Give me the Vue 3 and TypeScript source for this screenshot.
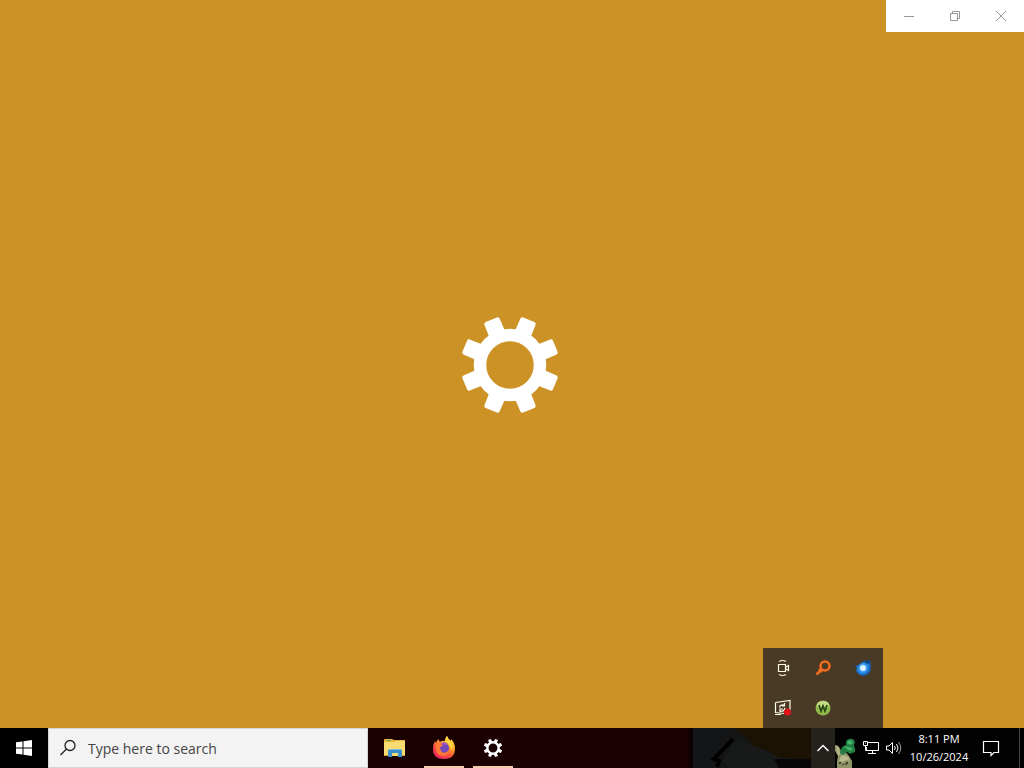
<script setup lang="ts">
import { ref } from 'vue'

const query = ref('')
const teeth: number[] = [22.5, 67.5, 112.5, 157.5, 202.5, 247.5, 292.5, 337.5]
</script>

<template>
  <div class="desktop">
    <main class="window">
      <div class="captions">
        <button type="button" aria-label="Minimize">
          <svg width="12" height="12" viewBox="0 0 12 12"><path d="M1 6.500h10" /></svg>
        </button>
        <button type="button" aria-label="Restore">
          <svg width="12" height="12" viewBox="0 0 12 12"><path d="M1.500 3.500h7v7h-7zM3.500 3.500v-2h7v7h-2" /></svg>
        </button>
        <button type="button" aria-label="Close">
          <svg width="12" height="12" viewBox="0 0 12 12"><path d="M1 1l10 10M11 1L1 11" /></svg>
        </button>
      </div>
      <svg class="splash" width="100" height="100" viewBox="-50 -50 100 100" aria-hidden="true">
        <circle r="30" fill="none" stroke="#fff" stroke-width="12.500" />
        <path
          v-for="angle in teeth"
          :key="angle"
          :transform="`rotate(${angle})`"
          d="M-8.500-32L-8.200-47Q-8-49-6-49H6Q8-49 8.200-47L8.500-32Z"
          fill="#fff"
        />
      </svg>
    </main>

    <footer class="taskbar">
      <svg class="wallpaper" width="656" height="40" viewBox="0 0 656 40" aria-hidden="true">
        <rect width="656" height="40" fill="#020202" />
        <rect width="325" height="40" fill="#1c0103" />
        <rect x="321" width="4" height="40" fill="#0b0102" />
        <path d="M325 0h60l20 22 40 9v9H325z" fill="#141516" />
        <path d="M366 0h77v31q-32 0-51-10z" fill="#1b1204" />
        <path d="M368 11l24 9q20 6 31 20h-62l-6-8z" fill="#171a18" />
        <path d="M378 15l14 5q12 4 20 10h31V20z" fill="#1b1204" />
        <path d="M406 31h40v9h-35z" fill="#080708" />
        <path d="M365 11l-19 20 5 2-2 6" fill="none" stroke="#000" stroke-width="4" />
      </svg>

      <button class="start" type="button" aria-label="Start">
        <svg width="16" height="16" viewBox="0 0 16 16">
          <path d="M0 2.300L6.500 1.400V7.500H0zM7.500 1.200L16 0v7.500H7.500zM0 8.500h6.500v6.100L0 13.700zM7.500 8.500H16V16l-8.500-1.200z" fill="#fff" />
        </svg>
      </button>
      <label class="search">
        <svg width="18" height="18" viewBox="0 0 18 18" fill="none" stroke="#222" stroke-width="1.300">
          <circle cx="11" cy="6.500" r="5" /><path d="M7.500 10L1.500 16" />
        </svg>
        <input v-model="query" type="text" placeholder="Type here to search" aria-label="Search" />
      </label>

      <nav class="apps" aria-label="Applications">
        <button class="app" type="button" aria-label="File Explorer">
          <svg width="24" height="24" viewBox="0 0 24 24">
            <path d="M1 4q0-1 1-1h7l2 1h11v5H1z" fill="#e9b53c" />
            <path d="M4 4h4v1H4z" fill="#55a867" />
            <path d="M1 6h10l2-1h9v15H1z" fill="#f8db71" />
            <path d="M5 21v-6q0-2 2-2h10q2 0 2 2v6h-4v-4H9v4z" fill="#3a91cc" />
            <path d="M6 13h12v1H6z" fill="#76bde4" />
            <path d="M1 19h4v1H1zM19 19h3v1h-3z" fill="#d79d2b" />
          </svg>
        </button>
        <button class="app running" type="button" aria-label="Firefox">
          <svg width="24" height="24" viewBox="0 0 24 24">
            <defs>
              <linearGradient id="flame" x1="0.850" y1="0" x2="0.250" y2="1">
                <stop offset="0" stop-color="#fff04a" /><stop offset="0.350" stop-color="#ffac26" />
                <stop offset="0.650" stop-color="#ff5638" /><stop offset="1" stop-color="#ed2069" />
              </linearGradient>
            </defs>
            <path d="M3 5l1 2 2-4 2 3q2-2 5-1 0-3 2-5 1 3 3 4l1 2q0-2 0-3 4 4 4 9 0 11-11 11T1 13q0-5 2-8z" fill="url(#flame)" />
            <circle cx="12" cy="12" r="5" fill="#7549bd" />
            <path d="M4 7q4-2 5 1l2 1q-1 2-3 2 0 5 4 6 3 0 5-3-1 6-6 6-7 0-7-8z" fill="#ff7835" />
            <path d="M9 7q3-2 7 1l-3 1z" fill="#9c58d2" />
            <path d="M15 0q1 3 4 5 3 5 0 10 0-6-6-10 0-3 2-5z" fill="#ffd440" />
          </svg>
        </button>
        <button class="app running" type="button" aria-label="Settings">
          <svg width="20" height="20" viewBox="-53 -53 106 106">
            <circle r="30" fill="none" stroke="#fff" stroke-width="13" />
            <path
              v-for="angle in teeth"
              :key="angle"
              :transform="`rotate(${angle})`"
              d="M-9-32L-8-49H8L9-32Z"
              fill="#fff"
            />
          </svg>
        </button>
      </nav>

      <div class="tray">
        <button class="chevron" type="button" aria-label="Hide hidden icons">
          <svg width="14" height="10" viewBox="0 0 14 10"><path d="M1.500 8L7 2.500 12.500 8" fill="none" stroke="#fff" stroke-width="1.500" /></svg>
        </button>
        <button class="pet" type="button" aria-label="Desktop companion">
          <svg width="24" height="32" viewBox="0 0 24 32">
            <path d="M0 9q4 0 5 4l2 3 3-1 4 5 3 5v7H2v-7l1-5-3-5z" fill="#8c9468" />
            <path d="M1 10l3 2 1 6-2 2zM6 20q4-2 7 1l2 4-4-1-3 2-4-1z" fill="#b8b98c" />
            <path d="M4 26h2v2H4zM11 26h2v2h-2z" fill="#3c3b24" />
            <path d="M7 29q3-2 5 0" stroke="#514b2d" fill="none" />
            <path d="M6 13q2-4 5-4-1-5 3-6 5-1 6 3-1 2-1 4 2 3 1 6l-5 2-3-2-4 3-3-2z" fill="#237c42" />
            <path d="M13 5q4-2 5 2-3 3-6 0zM9 11q5-1 9 2l-3 2z" fill="#43b568" />
          </svg>
        </button>
        <button class="network" type="button" aria-label="Network">
          <svg width="18" height="16" viewBox="0 0 18 16" fill="none" stroke="#fff">
            <path d="M6 2.500h10.500v8H4.500V7M10.500 10.500v3M6 13.500h8M1.500 1.500h4v4h-4zM3.500 5.500v5h1" />
            <path d="M3 3h1" />
          </svg>
        </button>
        <button class="volume" type="button" aria-label="Volume">
          <svg width="18" height="16" viewBox="0 0 18 16" fill="none" stroke="#fff">
            <path d="M1.500 6v4h2.500l3.500 3.500v-11L4 6z" /><path d="M9.500 6q1.500 2 0 4M11.500 4q3 4 0 8" />
            <path d="M13.500 2q4.500 6 0 12" stroke="#999" />
          </svg>
        </button>
        <button class="clock" type="button">
          <span>8:11 PM</span>
          <span>10/26/2024</span>
        </button>
        <button class="notices" type="button" aria-label="Notifications">
          <svg width="18" height="18" viewBox="0 0 18 18"><path d="M1.500 2.500h15v11H12L9 16.500v-3H1.500z" fill="none" stroke="#fff" stroke-width="1.200" /></svg>
        </button>
        <button class="peek" type="button" aria-label="Show desktop"></button>
      </div>
    </footer>

    <section class="flyout" aria-label="Hidden icons">
      <button type="button" aria-label="Meet Now">
        <svg width="16" height="18" viewBox="0 0 16 18" fill="none" stroke="#fff8dc">
          <path d="M3.500 5.500h7v7h-7zM11 8l2.500-1.500v5L11 10M4 2.500Q7.500 .5 11 2.500M4 15.500q3.500 2 7 0" stroke-width="1.200" />
        </svg>
      </button>
      <button type="button" aria-label="Search tool">
        <svg width="16" height="16" viewBox="0 0 16 16" fill="none" stroke="#f36b1c">
          <circle cx="10" cy="6" r="4.500" stroke-width="2.500" /><path d="M6.500 9.500L1.500 14.500M4 9l3 3" stroke-width="2.500" />
        </svg>
      </button>
      <button type="button" aria-label="Thunderbird">
        <svg width="18" height="18" viewBox="0 0 18 18">
          <path d="M1 6l4 1q2-4 6-5l5-1 1 7q0 8-8 9-6-1-7-6l1-1z" fill="#1764b5" />
          <path d="M3 10q1-6 8-7 3 0 4 4 0 7-6 8-5 0-6-5z" fill="#298be3" />
          <circle cx="9" cy="9" r="3.500" fill="#8dd1ff" /><circle cx="9" cy="9" r="2.500" fill="#e4f4ff" />
          <path d="M11 2l5-1-1 4-4-1z" fill="#0c4486" />
        </svg>
      </button>
      <button type="button" aria-label="Sync, stopped">
        <svg width="18" height="18" viewBox="0 0 18 18" fill="none" stroke="#fffbe9">
          <path d="M1.500 3.500L16 1.500V11M10 14.500l-8.500-1V3.500M1 15.500h6" stroke-width="1.200" />
          <path d="M5.500 8.500q.5-3 4.500-2.500M10.500 4v3H8M6 13v-3h3M6 12q4 1 5-3" stroke-width="1.200" />
          <circle cx="13.500" cy="13" r="3.500" fill="#e3131c" stroke="none" />
        </svg>
      </button>
      <button type="button" aria-label="Webroot">
        <svg width="16" height="16" viewBox="0 0 16 16">
          <circle cx="8" cy="8" r="7.500" fill="#92b94b" /><ellipse cx="8" cy="5" rx="6" ry="4" fill="#c6dc87" />
          <path d="M4 5l2 6 2-5 2 5 2-6" fill="none" stroke="#284812" stroke-width="1.800" />
        </svg>
      </button>
    </section>
  </div>
</template>

<style>
body {
  margin: 0;
}
</style>

<style scoped>
.desktop {
  position: relative;
  display: flex;
  flex-direction: column;
  min-height: 100vh;
  font-family: "Open Sans", "Noto Sans", sans-serif;
}
button {
  display: flex;
  align-items: center;
  justify-content: center;
  margin: 0;
  padding: 0;
  border: 0;
  background: transparent;
  font-family: inherit;
  color: inherit;
}
svg {
  display: block;
  flex: none;
}
.window {
  flex: 1;
  display: grid;
  grid-template-rows: 32px 1fr 30px;
  background: #cd9226;
}
.captions {
  display: flex;
  justify-self: end;
  background: #fff;
}
.captions button {
  width: 46px;
}
.captions path {
  fill: none;
  stroke: #9a959a;
}
.splash {
  place-self: center;
  margin-right: 4px;
}
.taskbar {
  position: relative;
  display: flex;
  height: 40px;
  overflow: hidden;
  background: #000;
  color: #fff;
}
.wallpaper {
  position: absolute;
  top: 0;
  right: 0;
}
.start {
  width: 48px;
}
.search {
  position: relative;
  display: flex;
  align-items: center;
  box-sizing: border-box;
  width: 320px;
  padding: 0 10px;
  gap: 11px;
  border: 1px solid #d4d4d4;
  background: #f3f3f3;
}
.search input {
  flex: 1;
  min-width: 0;
  padding: 0;
  border: 0;
  outline: 0;
  background: transparent;
  font-family: inherit;
  font-size: 14px;
  color: #444;
}
.search input::placeholder {
  color: #444;
  opacity: 1;
}
.apps {
  position: relative;
  display: flex;
  gap: 9px;
  padding-left: 7px;
}
.app {
  box-sizing: border-box;
  width: 40px;
  border-bottom: 2px solid transparent;
  padding-top: 2px;
}
.running {
  border-bottom-color: #f3cda9;
}
.tray {
  position: relative;
  display: flex;
  margin-left: auto;
}
.chevron {
  width: 24px;
  background: #25211d;
}
.pet {
  width: 24px;
  align-items: flex-end;
}
.network {
  width: 24px;
}
.volume {
  width: 22px;
}
.clock {
  flex-direction: column;
  width: 68px;
  padding-bottom: 1px;
  font-size: 11px;
  line-height: 18px;
}
.notices {
  width: 36px;
}
.peek {
  width: 5px;
  margin-left: 10px;
  border-left: 1px solid #444;
}
.flyout {
  position: absolute;
  right: 141px;
  bottom: 40px;
  display: grid;
  grid-template-columns: repeat(3, 40px);
  grid-auto-rows: 40px;
  background: #483a25;
}
</style>
